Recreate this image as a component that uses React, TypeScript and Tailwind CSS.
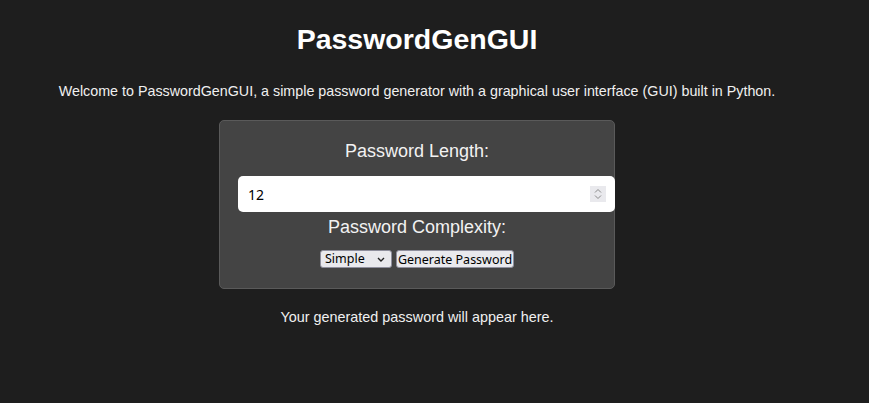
import React from 'react';

const App: React.FC = () => {
  return (
    <div className="min-h-[403px] w-full bg-[#1e1e1e] font-['Liberation_Sans',Arial,sans-serif] text-white">
      <div className="flex w-[834px] flex-col items-center">
        <h1 className="mt-[21px] text-[28.5px] leading-[37px] font-bold">PasswordGenGUI</h1>
        <p className="mt-[24px] text-[14.3px] leading-[18px] text-[#f0f0f0]">
          Welcome to PasswordGenGUI, a simple password generator with a graphical user interface (GUI) built in Python.
        </p>
        <div className="mt-[20px] w-[396px] rounded-[5px] border border-[#5a5a5a] bg-[#444444] px-[18px] pt-[20px] pb-[20px]">
          <label className="block text-center text-[18px] leading-[21px] text-[#f2f2f2]">Password Length:</label>
          <div className="relative mt-[14px] -mr-[19px]">
            <input
              type="text"
              defaultValue="12"
              className="block h-[36px] w-full rounded-[5px] bg-white px-[10px] font-['Noto_Sans',sans-serif] text-[14px] text-black outline-none"
            />
            <span className="absolute top-[10px] right-[9px] flex h-[16px] w-[16px] items-center justify-center bg-[#e9e9ed]">
              <svg width="8" height="12" viewBox="0 0 8 12" fill="none" stroke="#8a8a8a" strokeWidth="1">
                <path d="M1 4.5 L4 1.5 L7 4.5" />
                <path d="M1 7.5 L4 10.5 L7 7.5" />
              </svg>
            </span>
          </div>
          <label className="mt-[5px] block text-center text-[18px] leading-[21px] text-[#f2f2f2]">Password Complexity:</label>
          <div className="mt-[12px] flex items-center justify-center gap-[4px] font-['Noto_Sans',sans-serif] text-[12.5px] text-black">
            <div className="relative h-[18px] w-[72px] rounded-[3px] border border-[#8f8f9d] bg-[#e9e9ed]">
              <span className="absolute top-[-1px] left-[4px] leading-[18px]">Simple</span>
              <svg className="absolute top-[6px] right-[6px]" width="8" height="5" viewBox="0 0 8 5" fill="none" stroke="#222" strokeWidth="1.4">
                <path d="M1 1 L4 4 L7 1" />
              </svg>
            </div>
            <button className="h-[18px] w-[118px] whitespace-nowrap rounded-[3px] border border-[#8f8f9d] bg-[#e9e9ed] px-0 leading-[15px]">
              Generate Password
            </button>
          </div>
        </div>
        <p className="mt-[19px] text-[14.4px] leading-[18px] text-[#f0f0f0]">Your generated password will appear here.</p>
      </div>
    </div>
  );
};

export default App;
